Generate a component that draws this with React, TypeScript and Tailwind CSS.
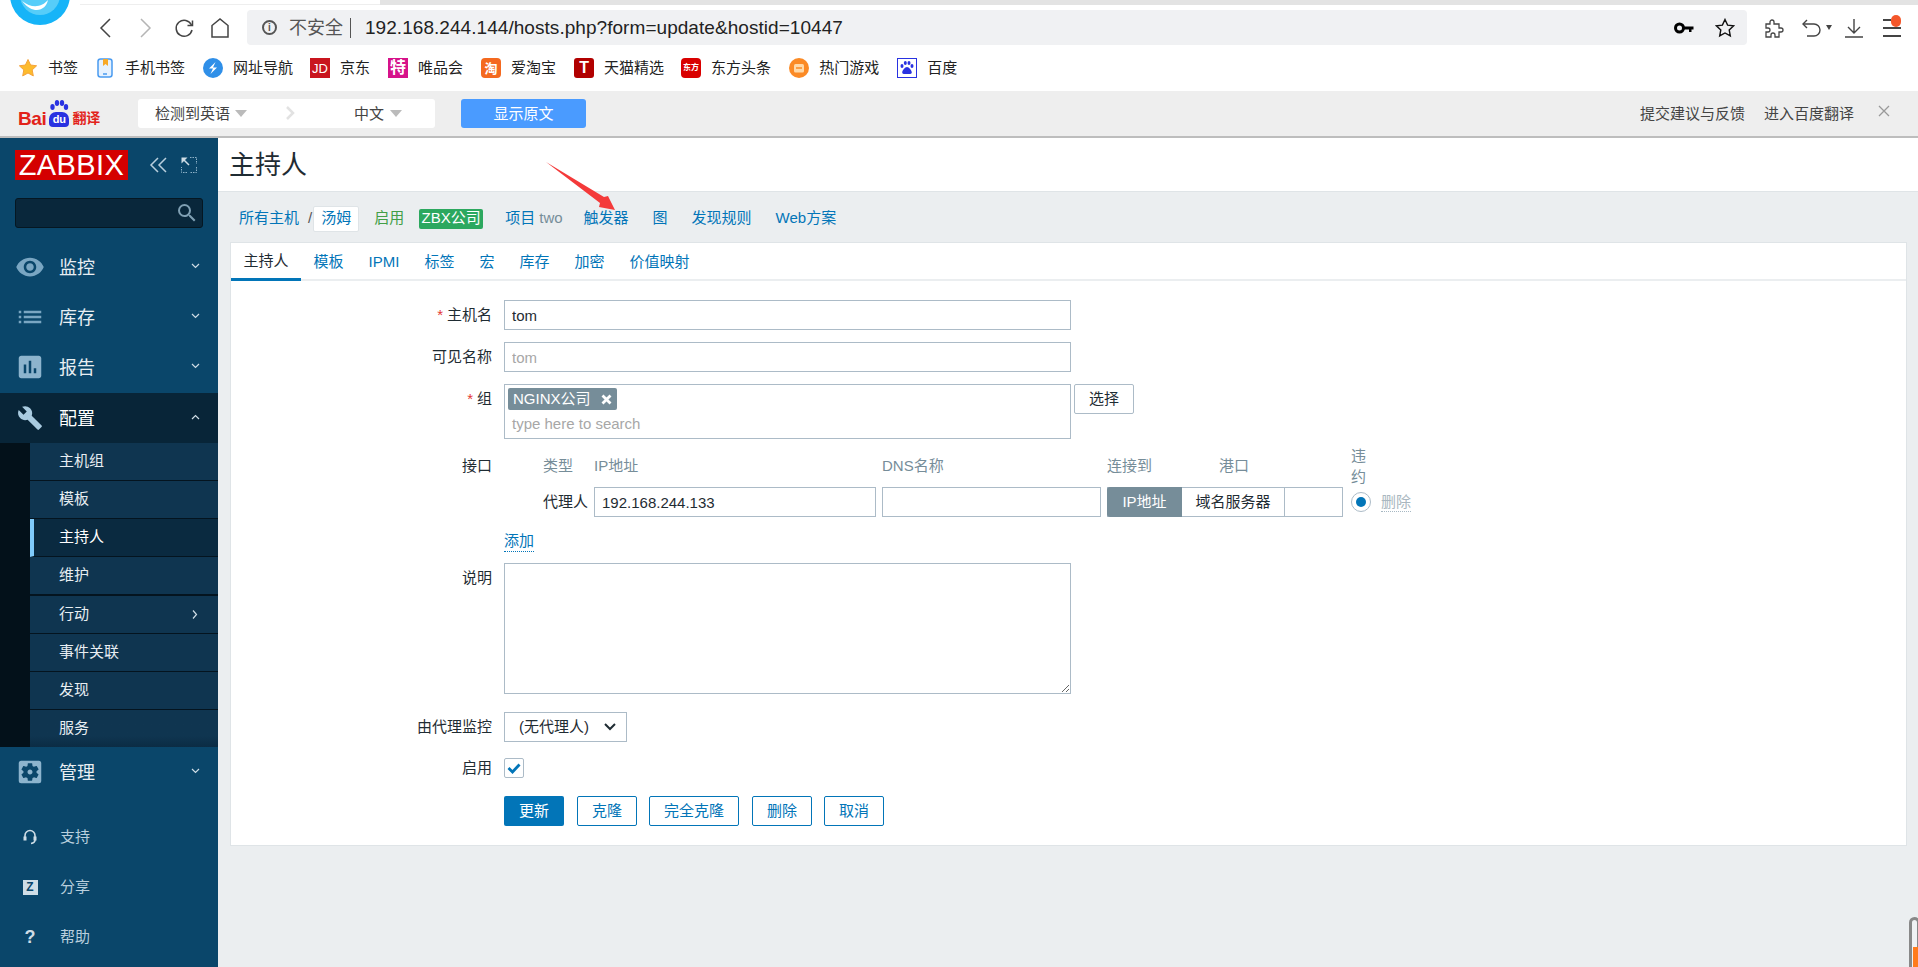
import type { ReactNode } from 'react'
import { MdAssessment, MdBuild, MdList, MdSearch, MdSettingsApplications, MdVisibility } from 'react-icons/md'

const bookmarks: { name: string; icon: ReactNode; gap: string }[] = [
  { name: '书签', gap: 'ml-[18px]', icon: <StarIcon /> },
  { name: '手机书签', gap: 'ml-[17px]', icon: <PhoneIcon /> },
  { name: '网址导航', gap: 'ml-[18px]', icon: <GuideIcon /> },
  { name: '京东', gap: 'ml-[17px]', icon: <span className="flex h-5 w-5 items-center justify-center bg-[#c9151e] text-[13px] leading-none text-white">JD</span> },
  { name: '唯品会', gap: 'ml-[18px]', icon: <span className="flex h-5 w-5 items-center justify-center bg-[#d6128a] text-[16px] font-bold leading-none text-white">特</span> },
  { name: '爱淘宝', gap: 'ml-[18px]', icon: <span className="flex h-5 w-5 items-center justify-center rounded-[4px] bg-[#f4691f] text-[13px] font-bold leading-none text-white">淘</span> },
  { name: '天猫精选', gap: 'ml-[18px]', icon: <span className="flex h-5 w-5 items-center justify-center rounded-[3px] bg-[#b10000] text-[16px] font-bold leading-none text-white">T</span> },
  { name: '东方头条', gap: 'ml-[17px]', icon: <span className="flex h-5 w-5 items-center justify-center rounded-[4px] bg-[#d90000] text-[8px] font-bold leading-none text-white">东方</span> },
  { name: '热门游戏', gap: 'ml-[18px]', icon: <GameIcon /> },
  { name: '百度', gap: 'ml-[18px]', icon: <PawIcon /> },
]

const subItems = ['主机组', '模板', '主持人', '维护', '行动', '事件关联', '发现', '服务']

const tabs = ['主持人', '模板', 'IPMI', '标签', '宏', '库存', '加密', '价值映射']

function StarIcon() {
  return (
    <svg width="20" height="20" viewBox="0 0 20 20">
      <path d="M10 1.5l2.600 5.500 6 .8-4.400 4.100 1.100 6L10 15l-5.300 2.900 1.100-6L1.400 7.800l6-.8z" fill="#fdbb2d" stroke="#f5a33a" strokeWidth="1" />
    </svg>
  )
}

function PhoneIcon() {
  return (
    <svg width="20" height="20" viewBox="0 0 20 20">
      <rect x="3" y="1" width="14" height="18" rx="2.500" fill="#e6f2ff" stroke="#4a9bf0" strokeWidth="1.500" />
      <path d="M8 1h5v7l-2.500-2L8 8z" fill="#f7a928" />
      <path d="M8 16h4" stroke="#4a9bf0" strokeWidth="1.500" />
    </svg>
  )
}

function GuideIcon() {
  return (
    <svg width="20" height="20" viewBox="0 0 20 20">
      <circle cx="10" cy="10" r="10" fill="#2f8fe8" />
      <path d="M12.500 4L6 10.500h4L7.500 16 14 9.500h-4z" fill="#fff" />
    </svg>
  )
}

function GameIcon() {
  return (
    <svg width="20" height="20" viewBox="0 0 20 20">
      <circle cx="10" cy="10" r="10" fill="#fb8a25" />
      <rect x="5" y="6" width="10" height="8.500" rx="1.500" fill="#ffd9a8" />
      <path d="M7 10h6" stroke="#fb8a25" strokeWidth="1.500" />
    </svg>
  )
}

function PawIcon() {
  return (
    <svg width="20" height="20" viewBox="0 0 20 20">
      <rect x="0.500" y="0.500" width="19" height="19" fill="#fff" stroke="#2932e1" />
      <ellipse cx="5" cy="8" rx="1.500" ry="2" fill="#2932e1" />
      <ellipse cx="8.300" cy="5" rx="1.500" ry="2" fill="#2932e1" />
      <ellipse cx="12" cy="5" rx="1.500" ry="2" fill="#2932e1" />
      <ellipse cx="15" cy="8" rx="1.500" ry="2" fill="#2932e1" />
      <path d="M10 9c2 0 4.800 3.500 4.800 5.500S12 16 10 16s-4.800.5-4.800-1.500S8 9 10 9z" fill="#2932e1" />
    </svg>
  )
}

function BrowserToolbar() {
  return (
    <div className="flex h-[45px] items-start bg-white pl-[98px] pt-[5px]">
      <div className="flex h-[35px] items-center">
        <svg width="14" height="22" viewBox="0 0 14 22" fill="none" stroke="#444" strokeWidth="1.500"><path d="M12 2L3 11l9 9" /></svg>
        <svg className="ml-[27px]" width="14" height="22" viewBox="0 0 14 22" fill="none" stroke="#b5b5b5" strokeWidth="1.500"><path d="M2 2l9 9-9 9" /></svg>
        <svg className="ml-[20px]" width="22" height="22" viewBox="0 0 22 22" fill="none" stroke="#444" strokeWidth="1.500"><path d="M18.500 8A8 8 0 1 0 19 13" /><path d="M14.500 8.500h5v-5" /></svg>
        <svg className="ml-[14px]" width="22" height="22" viewBox="0 0 22 22" fill="none" stroke="#444" strokeWidth="1.500"><path d="M3 20V8.500L11 2l8 6.500V20z" /></svg>
      </div>
      <div className="ml-[16px] flex h-[35px] w-[1500px] items-center rounded-[4px] bg-[#f0f1f3] pl-[15px]">
        <span className="flex h-[15px] w-[15px] items-center justify-center rounded-full border-2 border-[#555] text-[10px] font-bold leading-none text-[#555]">i</span>
        <span className="ml-[12px] text-[18px] leading-none text-[#555]">不安全</span>
        <span className="ml-[7px] h-[20px] w-px bg-[#555]" />
        <span className="ml-[14px] text-[19px] leading-none tracking-[0.05px] text-[#222]">192.168.244.144/hosts.php?form=update&amp;hostid=10447</span>
        <svg className="ml-auto" width="20" height="12" viewBox="0 0 20 12">
          <circle cx="5.500" cy="6" r="4" fill="none" stroke="#000" strokeWidth="3" />
          <path d="M9 4.500h10.500v3h-2V10h-2.500V7.500H9z" />
        </svg>
        <svg className="ml-[21px] mr-[12px]" width="20" height="20" viewBox="0 0 20 20" fill="none" stroke="#111" strokeWidth="1.400"><path d="M10 1.500l2.600 5.600 6 .7-4.400 4.100 1.100 6L10 15l-5.300 2.900 1.100-6L1.400 7.800l6-.7z" /></svg>
      </div>
      <div className="flex h-[35px] items-center">
        <svg className="ml-[17px]" width="20" height="20" viewBox="0 0 20 20" fill="none" stroke="#444" strokeWidth="1.300"><path d="M2 6h4V4a2 2 0 0 1 4 0v2h5v4h2a2 2 0 0 1 0 4h-2v5h-4v-2a2 2 0 0 0-4 0v2H2v-5h2a2 2 0 0 0 0-4H2z" /></svg>
        <svg className="ml-[17px]" width="22" height="22" viewBox="0 0 22 22" fill="none" stroke="#444" strokeWidth="1.400"><path d="M6 3L2 7l4 4" /><path d="M2 7h11a6 6 0 0 1 0 12H6" /></svg>
        <svg className="ml-[3px]" width="6" height="5" viewBox="0 0 6 5"><path d="M0 0h6L3 5z" fill="#444" /></svg>
        <svg className="ml-[13px]" width="18" height="22" viewBox="0 0 18 22" fill="none" stroke="#444" strokeWidth="1.400"><path d="M9 2v14M3 10l6 6 6-6M0 20h18" /></svg>
        <div className="relative ml-[20px] flex h-[20px] w-[18px] flex-col justify-between py-[1px]">
          <span className="h-[2px] w-[8px] bg-[#444]" />
          <span className="h-[2px] w-[18px] bg-[#444]" />
          <span className="h-[2px] w-[18px] bg-[#444]" />
          <span className="absolute -top-[3px] right-0 h-[12px] w-[10px] rounded-full bg-[#f4572a]" />
        </div>
      </div>
    </div>
  )
}

function BookmarkBar() {
  return (
    <div className="flex h-[41px] items-center bg-white pb-[5px] pl-[18px] text-[15px] text-[#222]">
      {bookmarks.map((b, i) => (
        <div key={b.name} className={`flex items-center ${i > 0 ? b.gap : ''}`}>
          {b.icon}
          <span className="ml-[10px] whitespace-nowrap">{b.name}</span>
        </div>
      ))}
    </div>
  )
}

function BaiduLogo() {
  return (
    <div className="ml-[18px] flex h-[27px] w-[84px] items-end">
      <span className="text-[19px] font-bold leading-[17px] tracking-[-0.4px] text-[#e2231a]">Bai</span>
      <div className="ml-[2px] flex w-[22px] flex-col items-center">
        <svg width="20" height="12" viewBox="0 0 20 12" fill="#2932e1">
          <ellipse cx="3.500" cy="7" rx="2.200" ry="3" />
          <ellipse cx="8" cy="3" rx="2.200" ry="3" />
          <ellipse cx="13" cy="3" rx="2.200" ry="3" />
          <ellipse cx="17" cy="7" rx="2.200" ry="3" />
        </svg>
        <span className="flex h-[15px] w-[20px] items-center justify-center rounded-t-[7px] rounded-b-[4px] bg-[#2932e1] text-[11px] font-bold leading-none text-white">du</span>
      </div>
      <span className="ml-[2px] text-[14px] font-bold leading-[17px] text-[#e2231a]">翻译</span>
    </div>
  )
}

function TranslateBar() {
  return (
    <div className="flex h-[47px] items-center border-b-2 border-[#bdbdbd] bg-[#eeeeee] pb-[1px] text-[15px] text-[#444]">
      <BaiduLogo />
      <div className="ml-[36px] flex h-[29px] w-[297px] items-center rounded-[3px] bg-white pl-[17px]">
        <span className="pt-[2px]">检测到英语</span>
        <span className="ml-[5px] h-0 w-0 border-x-[6px] border-t-[7px] border-x-transparent border-t-[#bbb]" />
        <svg className="ml-[38px]" width="10" height="14" viewBox="0 0 10 14" fill="none" stroke="#e2e2e2" strokeWidth="2.500"><path d="M2 1l6 6-6 6" /></svg>
        <span className="ml-[59px] pt-[2px]">中文</span>
        <span className="ml-[6px] h-0 w-0 border-x-[6px] border-t-[7px] border-x-transparent border-t-[#bbb]" />
      </div>
      <div className="ml-[26px] flex h-[29px] w-[125px] items-center justify-center rounded-[3px] bg-[#4a9bff] pt-[2px] text-white">显示原文</div>
      <span className="ml-auto pt-[3px]">提交建议与反馈</span>
      <span className="ml-[19px] pt-[3px]">进入百度翻译</span>
      <svg className="ml-[24px] mr-[28px] mb-[4px]" width="12" height="12" viewBox="0 0 12 12" fill="none" stroke="#999" strokeWidth="1.300"><path d="M1 1l10 10M11 1L1 11" /></svg>
    </div>
  )
}

function Chevron({ dir }: { dir: 'down' | 'up' | 'right' }) {
  const d = dir === 'down' ? 'M1 1l3.500 3.500L8 1' : dir === 'up' ? 'M1 5l3.500-3.500L8 5' : 'M2 0.500l3.500 4-3.500 4'
  return (
    <svg width="9" height="9" viewBox="0 0 9 9" fill="none" stroke="#cfdde6" strokeWidth="1.200" className="ml-auto mr-[18px]">
      <path d={d} />
    </svg>
  )
}

function MainItem({ icon, label, open }: { icon: ReactNode; label: string; open?: boolean }) {
  return (
    <div className={`flex h-[50px] items-center ${open ? 'bg-[#082538] text-white' : 'text-[#e8eef2]'}`}>
      <span className="flex w-[59px] justify-center pl-px">{icon}</span>
      <span className="pt-px text-[18px] leading-none">{label}</span>
      <Chevron dir={open ? 'up' : 'down'} />
    </div>
  )
}

function SubMenu() {
  return (
    <div className="flex">
      <div className="w-[30px] bg-[#03111a]" />
      <div className="flex-1 bg-[#0f3550] text-[15px] text-[#e8eef2]">
        {subItems.map((item, i) => (
          <div
            key={item}
            className={`flex items-center pl-[29px] ${i === 3 ? 'h-[39px] border-b-2' : i === 7 ? 'h-[37px] bg-gradient-to-b from-[#0f3550] from-70% to-[#0b2c44]' : 'h-[38px] border-b'} border-[#04141f] ${i === 2 ? 'border-l-4 !border-l-[#7fcbfb] !pl-[25px] bg-[#0a2a40] text-white' : ''}`}
          >
            {item}
            {item === '行动' && <Chevron dir="right" />}
          </div>
        ))}
      </div>
    </div>
  )
}

function FooterItem({ icon, label }: { icon: ReactNode; label: string }) {
  return (
    <div className="flex h-[50px] items-center text-[15px] text-[#b9cfdd]">
      <span className="flex w-[60px] justify-center">{icon}</span>
      {label}
    </div>
  )
}

function Sidebar() {
  return (
    <aside className="w-[218px] shrink-0 bg-[#0a466a]">
      <div className="ml-[15px] mt-[12px] flex h-[30px] items-center">
        <div className="flex h-[30px] w-[113px] items-center justify-center bg-[#d40000] text-[29px] leading-none tracking-[0.4px] text-white">ZABBIX</div>
        <svg className="ml-[21px]" width="18" height="16" viewBox="0 0 18 16" fill="none" stroke="#b9cfdd" strokeWidth="1.500"><path d="M9 1L2 8l7 7M17 1l-7 7 7 7" /></svg>
        <svg className="ml-[14px]" width="16" height="16" viewBox="0 0 16 16" fill="none" stroke="#8fb2c8">
          <path d="M9 .5h6.500V7M15.500 10v5.500H9M6 15.500H.5V10" strokeDasharray="1.500 1" />
          <path d="M.5 .5h6L.5 6.500z" fill="#cfdde6" stroke="none" />
          <path d="M2 2l6 6" stroke="#cfdde6" strokeWidth="1.500" />
        </svg>
      </div>
      <div className="ml-[15px] mt-[18px] flex h-[30px] w-[188px] items-center justify-end rounded-[3px] border border-[#051722] bg-[#09273b] pr-[3px]">
        <MdSearch size={24} className="text-[#7f9fb3]" />
      </div>
      <div className="mt-[14px]">
        <MainItem label="监控" icon={<MdVisibility size={30} className="text-[#7aa6c2]" />} />
        <MainItem label="库存" icon={<MdList size={30} className="text-[#7aa6c2]" />} />
        <MainItem label="报告" icon={<MdAssessment size={30} className="text-[#8db4cd]" />} />
        <div className="mt-px">
          <MainItem open label="配置" icon={<MdBuild size={26} className="text-[#a9cbe0]" />} />
        </div>
        <SubMenu />
        <MainItem label="管理" icon={<MdSettingsApplications size={30} className="text-[#8db4cd]" />} />
      </div>
      <div className="mt-[15px]">
        <FooterItem
          label="支持"
          icon={
            <svg width="14" height="16" viewBox="0 0 14 16" fill="none" stroke="#cfdde6">
              <path d="M2 8V6.500a5 5 0 0 1 10 0V8" strokeWidth="1.600" />
              <path d="M2 7.500v4M12 7.500v4" strokeWidth="3" />
              <path d="M12 11c0 2-1 3-4 3.500" strokeWidth="1.600" />
            </svg>
          }
        />
        <FooterItem
          label="分享"
          icon={<span className="flex h-[15px] w-[15px] items-center justify-center bg-[#cfdde6] text-[12px] font-bold leading-none text-[#0a466a]">Z</span>}
        />
        <FooterItem label="帮助" icon={<span className="text-[18px] font-bold leading-none text-[#cfdde6]">?</span>} />
      </div>
    </aside>
  )
}

function NavBar() {
  return (
    <div className="flex h-[50px] items-center pl-[21px] pt-[3px] text-[15px] text-[#0275b8]">
      <span>所有主机</span>
      <span className="ml-[9px] text-[#555]">/</span>
      <span className="ml-[1px] flex h-[26px] w-[46px] items-center justify-center rounded-[2px] border border-[#dfe4e7] bg-white">汤姆</span>
      <span className="ml-[15px] text-[#429e47]">启用</span>
      <span className="ml-[15px] flex h-[20px] w-[64px] items-center justify-center rounded-[2px] bg-[#2ca85f] text-white">ZBX公司</span>
      <span className="ml-[22px]">项目</span>
      <span className="ml-[4px] text-[#768d99]">two</span>
      <span className="ml-[21px]">触发器</span>
      <span className="ml-[24px]">图</span>
      <span className="ml-[24px]">发现规则</span>
      <span className="ml-[24px]">Web方案</span>
    </div>
  )
}

function Tabs() {
  return (
    <div className="flex h-[38px] border-b-2 border-[#ebeef0] text-[15px] text-[#0275b8]">
      {tabs.map((tab, i) => (
        <div
          key={tab}
          className={`flex items-center px-[12.5px] pt-[2px] ${i === 0 ? '-mb-[2px] border-b-[3px] border-[#0275b8] text-[#1f2c33]' : ''}`}
        >
          {tab}
        </div>
      ))}
    </div>
  )
}

function Row({ label, required, className, labelClass, children }: { label: string; required?: boolean; className?: string; labelClass?: string; children: ReactNode }) {
  return (
    <div className={`flex ${className ?? ''}`}>
      <div className={`mr-[12px] w-[261px] shrink-0 text-right leading-[30px] ${labelClass ?? ''}`}>
        {required && <span className="mr-[4px] text-[#e33734]">*</span>}
        {label}
      </div>
      {children}
    </div>
  )
}

const inputClass = 'h-[30px] border border-[#acbbc7] bg-white px-[7px] text-[15px] text-[#1f2c33] outline-none'

function InterfaceTable() {
  const head = 'text-[#768d99]'
  return (
    <div className="ml-[39px] grid grid-cols-[45px_282px_219px_106px_59px_59px_26px_auto] grid-rows-[42px_30px] items-center gap-x-[6px]">
      <span className={head}>类型</span>
      <span className={head}>IP地址</span>
      <span className={head}>DNS名称</span>
      <span className={head}>连接到</span>
      <span className={head}>港口</span>
      <span />
      <span className={`${head} pl-[2px] leading-[21px]`}>违约</span>
      <span />
      <span className="whitespace-nowrap">代理人</span>
      <input readOnly value="192.168.244.133" className={`${inputClass} w-full`} />
      <input readOnly className={`${inputClass} w-full`} />
      <div className="col-span-2 flex h-[30px] w-[177px] border border-[#acbbc7] border-r-0 text-[15px]">
        <span className="-my-px -ml-px flex h-[30px] w-[75px] items-center justify-center rounded-l-[3px] bg-[#768d99] text-white">IP地址</span>
        <span className="flex flex-1 items-center justify-center">域名服务器</span>
      </div>
      <input readOnly className={`${inputClass} w-full`} />
      <span className="ml-[2px] flex h-[20px] w-[20px] items-center justify-center rounded-full border border-[#acbbc7] bg-white">
        <span className="h-[10px] w-[10px] rounded-full bg-[#0275b8]" />
      </span>
      <span className="whitespace-nowrap border-b border-dotted border-[#a7b8c3] leading-[19px] text-[#a9b7c0]">删除</span>
    </div>
  )
}

function HostForm() {
  return (
    <div className="flex flex-col pt-[19px] text-[15px] text-[#1f2c33]">
      <Row required label="主机名">
        <input readOnly value="tom" className={`${inputClass} w-[567px]`} />
      </Row>
      <Row label="可见名称" className="mt-[12px]">
        <input readOnly placeholder="tom" className={`${inputClass} w-[567px] placeholder:text-[#a7a7a7]`} />
      </Row>
      <Row required label="组" className="mt-[12px]">
        <div className="h-[55px] w-[567px] border border-[#acbbc7] bg-white pl-[3px] pt-[3px]">
          <div className="flex h-[22px] w-[109px] items-center rounded-[2px] bg-[#768d99] pl-[5px] text-white">
            NGINX公司
            <svg className="ml-[10px]" width="11" height="11" viewBox="0 0 11 11" fill="none" stroke="#fff" strokeWidth="2.800"><path d="M1.500 1.500l8 8M9.500 1.500l-8 8" /></svg>
          </div>
          <div className="mt-[4px] pl-[4px] leading-[20px] text-[#a7a7a7]">type here to search</div>
        </div>
        <div className="ml-[3px] flex h-[30px] w-[60px] items-center justify-center rounded-[2px] border border-[#acbbc7] bg-white">选择</div>
      </Row>
      <Row label="接口" className="mt-[6px]" labelClass="pt-[6px]">
        <InterfaceTable />
      </Row>
      <Row label="" className="mt-[13px]">
        <span className="self-start border-b border-dotted border-[#0275b8] leading-[21px] text-[#0275b8]">添加</span>
      </Row>
      <Row label="说明" className="mt-[11px]">
        <textarea readOnly className="h-[131px] w-[567px] border border-[#acbbc7] bg-white outline-none" />
      </Row>
      <Row label="由代理监控" className="mt-[18px]">
        <div className="flex h-[30px] w-[123px] items-center border border-[#acbbc7] pl-[14px]">
          (无代理人)
          <svg className="ml-[15px]" width="12" height="8" viewBox="0 0 12 8" fill="none" stroke="#1f2c33" strokeWidth="2"><path d="M1 1l5 5 5-5" /></svg>
        </div>
      </Row>
      <Row label="启用" className="mt-[16px]" labelClass="!leading-[20px]">
        <span className="flex h-[20px] w-[20px] items-center justify-center rounded-[2px] border border-[#acbbc7]">
          <svg width="14" height="11" viewBox="0 0 14 11" fill="none" stroke="#0275b8" strokeWidth="2.800"><path d="M1.500 5l4 4 7-7.500" /></svg>
        </span>
      </Row>
      <Row label="" className="mb-[19px] mt-[18px]">
        <div className="flex gap-x-[13px]">
          <span className="flex h-[30px] w-[60px] items-center justify-center rounded-[2px] bg-[#0275b8] text-white">更新</span>
          <span className="flex h-[30px] w-[60px] items-center justify-center rounded-[2px] border border-[#0275b8] text-[#0275b8]">克隆</span>
          <span className="-ml-px flex h-[30px] w-[90px] items-center justify-center rounded-[2px] border border-[#0275b8] text-[#0275b8]">完全克隆</span>
          <span className="flex h-[30px] w-[60px] items-center justify-center rounded-[2px] border border-[#0275b8] text-[#0275b8]">删除</span>
          <span className="-ml-px flex h-[30px] w-[60px] items-center justify-center rounded-[2px] border border-[#0275b8] text-[#0275b8]">取消</span>
        </div>
      </Row>
    </div>
  )
}

export default function App() {
  return (
    <div className="relative flex h-[967px] w-[1918px] flex-col overflow-hidden bg-white font-['Liberation_Sans','Noto_Sans_CJK_SC',sans-serif]">
      <div className="flex h-[5px]">
        <div className="ml-[80px] w-[300px] border-b border-[#eee] bg-white" />
        <div className="flex-1 bg-[#e3e3e3]" />
      </div>
      <BrowserToolbar />
      <BookmarkBar />
      <TranslateBar />
      <div className="flex flex-1">
        <Sidebar />
        <main className="flex-1 bg-[#ebeef0]">
          <div className="flex h-[54px] items-center border-b border-[#dfe4e7] bg-white pl-[11px] text-[26px] leading-none text-[#1f2c33]">主持人</div>
          <NavBar />
          <div className="ml-[12px] mr-[11px] border border-[#dfe4e7] bg-white">
            <Tabs />
            <HostForm />
          </div>
        </main>
      </div>

      {/* blue browser logo cut off by the window edge */}
      <div className="absolute left-[3px] top-0 rounded-b-full bg-white px-[7px] pb-[6px]">
        <svg width="60" height="25" viewBox="0 35 60 25">
          <circle cx="30" cy="30" r="30" fill="#16b4f8" />
          <circle cx="30" cy="30" r="20" fill="#56cdf9" />
          <path d="M12 36c10 8 20 6 26-1-2 10-14 16-26 1z" fill="#fff" />
        </svg>
      </div>

      {/* red annotation arrow */}
      <svg className="absolute left-[540px] top-[160px]" width="80" height="55" viewBox="0 0 80 55">
        <polygon points="6,2 64,37 68,36 75,50 59,47 60,43" fill="#f43a3a" />
      </svg>

      {/* thermometer-like thing clipped at the bottom right */}
      <div className="absolute -bottom-[10px] left-[1909px] h-[60px] w-[11px] rounded-t-full border-[3px] border-[#888] bg-[#f0f2f4]">
        <div className="ml-[1px] mt-[27px] h-[30px] w-[5px] bg-[#ff7b1c]" />
      </div>
    </div>
  )
}
